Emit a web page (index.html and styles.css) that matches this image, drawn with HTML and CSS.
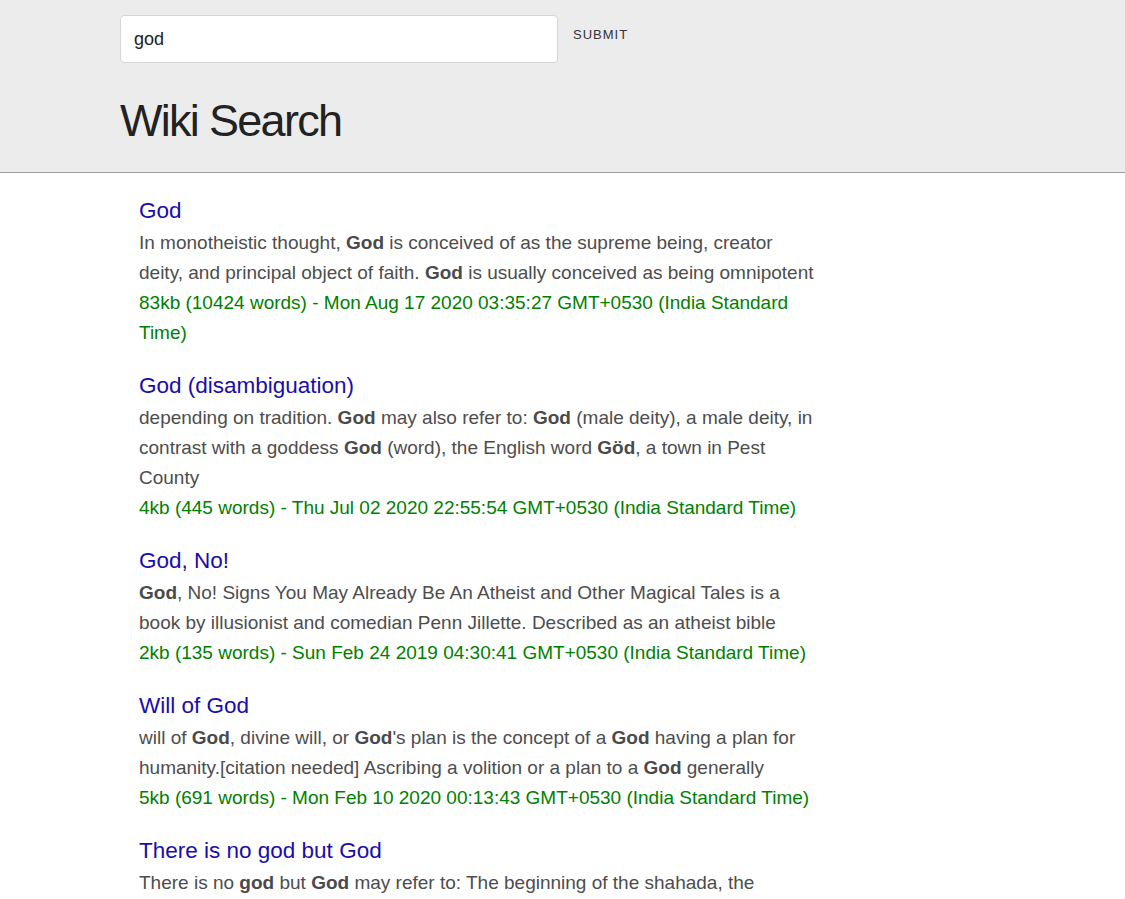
FILE: index.html
```html
<!DOCTYPE html>
<html>
<head>
<meta charset="utf-8">
<title>Wiki Search</title>
<link rel="stylesheet" href="styles.css">
</head>
<body>
<header class="header">
  <div class="container">
    <form class="search">
      <input class="search-input" type="text" value="god">
      <button class="search-btn" type="button">SUBMIT</button>
    </form>
    <h1 class="title">Wiki Search</h1>
  </div>
</header>
<main class="container results">
  <div class="result">
    <a class="result-title" href="#">God</a>
    <div class="snippet">In monotheistic thought, <b>God</b> is conceived of as the supreme being, creator deity, and principal object of faith. <b>God</b> is usually conceived as being omnipotent</div>
    <div class="meta">83kb (10424 words) - Mon Aug 17 2020 03:35:27 GMT+0530 (India Standard Time)</div>
  </div>
  <div class="result">
    <a class="result-title" href="#">God (disambiguation)</a>
    <div class="snippet">depending on tradition. <b>God</b> may also refer to: <b>God</b> (male deity), a male deity, in contrast with a goddess <b>God</b> (word), the English word <b>Göd</b>, a town in Pest County</div>
    <div class="meta">4kb (445 words) - Thu Jul 02 2020 22:55:54 GMT+0530 (India Standard Time)</div>
  </div>
  <div class="result">
    <a class="result-title" href="#">God, No!</a>
    <div class="snippet"><b>God</b>, No! Signs You May Already Be An Atheist and Other Magical Tales is a book by illusionist and comedian Penn Jillette. Described as an atheist bible</div>
    <div class="meta">2kb (135 words) - Sun Feb 24 2019 04:30:41 GMT+0530 (India Standard Time)</div>
  </div>
  <div class="result">
    <a class="result-title" href="#">Will of God</a>
    <div class="snippet">will of <b>God</b>, divine will, or <b>God</b>'s plan is the concept of a <b>God</b> having a plan for humanity.[citation needed] Ascribing a volition or a plan to a <b>God</b> generally</div>
    <div class="meta">5kb (691 words) - Mon Feb 10 2020 00:13:43 GMT+0530 (India Standard Time)</div>
  </div>
  <div class="result">
    <a class="result-title" href="#">There is no god but God</a>
    <div class="snippet">There is no <b>god</b> but <b>God</b> may refer to: The beginning of the shahada, the declaration of faith in Islam</div>
    <div class="meta">1kb (120 words) - Sat Jan 04 2020 10:12:30 GMT+0530 (India Standard Time)</div>
  </div>
</main>
</body>
</html>
```

FILE: styles.css
```css
html, body {
  margin: 0;
  padding: 0;
}
body {
  font-family: "Liberation Sans", Arial, sans-serif;
  background: #ffffff;
  color: #4d4d4d;
}
.container {
  width: 700px;
  margin-left: 120px;
}
.header {
  background: #ececec;
  border-bottom: 1px solid #9a9a9a;
  height: 172px;
}
.header .container {
  padding-top: 15px;
}
.search {
  display: flex;
  align-items: flex-start;
  margin: 0;
}
.search-input {
  box-sizing: border-box;
  width: 438px;
  height: 48px;
  border: 1px solid #d6d6d6;
  border-radius: 4px;
  background: #fff;
  padding: 0 13px;
  font-family: "Liberation Sans", Arial, sans-serif;
  font-size: 18px;
  color: #222;
  outline: none;
}
.search-btn {
  background: none;
  border: none;
  margin-left: 7px;
  padding: 0 8px;
  height: 38px;
  font-family: "Liberation Sans", Arial, sans-serif;
  font-size: 13px;
  letter-spacing: 1px;
  color: #333;
  cursor: pointer;
}
.title {
  margin: 26px 0 0 0;
  font-size: 45px;
  font-weight: normal;
  line-height: 64px;
  color: #222;
  letter-spacing: -1.7px;
}
.results {
  padding: 21px 0 0 19px;
  width: 681px;
}
.result {
  margin-bottom: 21px;
}
.result-title {
  display: block;
  font-size: 22.5px;
  line-height: 34px;
  color: #1a0dab;
  text-decoration: none;
}
.snippet, .meta {
  font-size: 19px;
  line-height: 30px;
}
.snippet b {
  color: #4a4a4a;
}
.meta {
  color: #008000;
}
```
